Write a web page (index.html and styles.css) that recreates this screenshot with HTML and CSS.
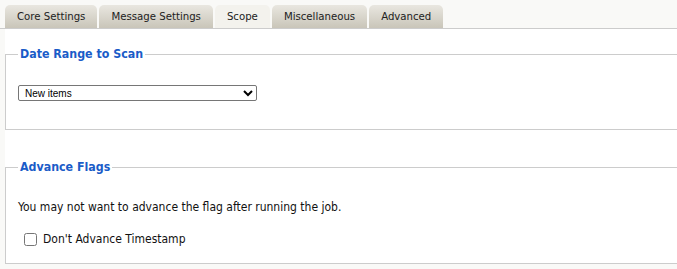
FILE: index.html
```html
<!DOCTYPE html>
<html>
<head>
<meta charset="utf-8">
<link rel="stylesheet" href="styles.css">
</head>
<body>
<div class="tabs">
  <div class="tab">Core Settings</div>
  <div class="tab">Message Settings</div>
  <div class="tab active">Scope</div>
  <div class="tab">Miscellaneous</div>
  <div class="tab">Advanced</div>
</div>
<div class="panel">
  <fieldset class="group first">
    <legend>Date Range to Scan</legend>
    <select class="range">
      <option>New items</option>
    </select>
  </fieldset>
  <fieldset class="group second">
    <legend>Advance Flags</legend>
    <p class="note">You may not want to advance the flag after running the job.</p>
    <label class="check"><input type="checkbox"> Don't Advance Timestamp</label>
  </fieldset>
</div>
</body>
</html>
```
FILE: styles.css
```css
html, body {
  margin: 0;
  padding: 0;
  background: #f9f9f7;
  font-family: "DejaVu Sans Condensed", "DejaVu Sans", sans-serif;
  font-stretch: condensed;
  font-size: 12px;
  color: #111;
}
.tabs {
  display: flex;
  gap: 2px;
  padding: 5px 0 0 5px;
  border-bottom: 1px solid #cccccc;
  height: 23px;
}
.tab {
  height: 23px;
  box-sizing: border-box;
  padding: 5px 12px 0;
  border-radius: 5px 5px 0 0;
  background: linear-gradient(#e9e7e0, #c9c5b9);
  color: #222;
  font-size: 11.3px;
}
.tab.active {
  background: #f3f2ed;
}
.panel {
  margin-left: 5px;
  background: #fff;
  padding-top: 18px;
  border-bottom: 1px solid #cccccc;
}
.group {
  margin: 0;
  border: 1px solid #cccccc;
  border-right: none;
  padding: 0 12px;
}
.group legend {
  color: #1a5cc8;
  font-weight: bold;
  font-size: 12.3px;
  padding: 0 2px;
  margin-left: 0;
}
.first {
  height: 83px;
  box-sizing: border-box;
  padding-top: 24px;
}
.range {
  display: block;
  width: 239px;
  height: 16px;
  font-size: 10px;
  font-family: "Liberation Sans", sans-serif;
  color: #000;
  border: 1px solid #767676;
  border-radius: 2px;
  background: #fff;
  padding: 0 2px;
}
.second {
  margin-top: 30px;
  border-bottom: none;
  padding-bottom: 17px;
}
.note {
  margin: 26px 0 0 0;
}
.check {
  display: flex;
  align-items: center;
  gap: 6px;
  margin: 18px 0 0 6px;
}
.check input {
  margin: 0;
  width: 13px;
  height: 13px;
}
```
